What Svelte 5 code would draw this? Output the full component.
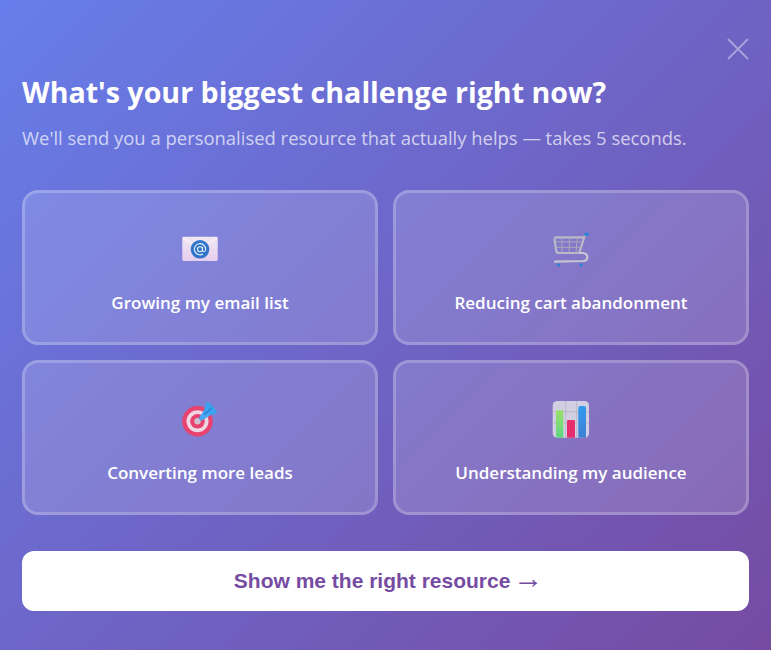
<script>
  const options = [
    { label: 'Growing my email list', icon: 'mail' },
    { label: 'Reducing cart abandonment', icon: 'cart' },
    { label: 'Converting more leads', icon: 'target' },
    { label: 'Understanding my audience', icon: 'chart' }
  ];
</script>

<main class="panel">
  <button class="close" aria-label="Close">
    <svg width="22" height="22" viewBox="0 0 22 22"><path d="M1 1 L21 21 M21 1 L1 21" /></svg>
  </button>
  <h1>What's your biggest challenge right now?</h1>
  <p>We'll send you a personalised resource that actually helps — takes 5 seconds.</p>
  <div class="grid">
    {#each options as o}
      <button class="card">
        <span class="icon">
          {#if o.icon === 'mail'}
            <svg width="40" height="40" viewBox="0 0 40 40">
              <defs>
                <linearGradient id="env" x1="0" y1="0" x2="0" y2="1"><stop offset="0" stop-color="#f0e8f4"/><stop offset="1" stop-color="#e6cdee"/></linearGradient>
              </defs>
              <rect x="2.3" y="6.700" width="35.400" height="24.400" rx="1.500" fill="url(#env)"/>
              <path d="M3 7.500 L20 20 L37 7.500" fill="none" stroke="#fff" stroke-width="1" opacity=".7"/>
              <circle cx="20" cy="19.300" r="9.300" fill="#2f75c9"/>
              <circle cx="20" cy="19.300" r="2.500" fill="none" stroke="#e8f0fb" stroke-width="1.100"/>
              <path d="M22.500 16.800 V20 Q22.500 21.800 24 21.800 Q25.600 21.600 25.600 19.300 A5.600 5.600 0 1 0 23 24" fill="none" stroke="#e8f0fb" stroke-width="1.100"/>
            </svg>
          {:else if o.icon === 'cart'}
            <svg width="40" height="40" viewBox="0 0 40 40">
              <path d="M5.500 7.300 H33.200 L28.900 21 Q28.300 23 26 23 H8 Q5.500 23 5.200 20.500 L3.600 10 Q3.300 7.300 5.500 7.300 Z" fill="none" stroke="#bab9c8" stroke-width="2.200"/>
              <path d="M4 11.900 H31.800 M4.800 17.300 H30 M10.700 7.300 L11.300 23 M18.300 7.300 V23 M26.300 7.300 L25 23" fill="none" stroke="#aaa8ba" stroke-width="1"/>
              <path d="M28.700 23 H32 Q36.300 23.500 36.300 27 Q36.300 30.700 32.300 31 L4 31.700" fill="none" stroke="#c6c5d2" stroke-width="2.200" stroke-linecap="round"/>
              <path d="M33.200 7.300 L34.500 4" fill="none" stroke="#aaa8ba" stroke-width="2"/>
              <rect x="33.300" y="2.700" width="4.700" height="3" rx="1" fill="#2b86d9"/>
              <rect x="6" y="33.500" width="3" height="3" rx="1.200" fill="#2b7ed0"/>
              <rect x="28.600" y="33.500" width="3" height="3" rx="1.200" fill="#2b7ed0"/>
            </svg>
          {:else if o.icon === 'target'}
            <svg width="40" height="40" viewBox="0 0 40 40">
              <circle cx="17.500" cy="21.300" r="15.300" fill="#e8426e"/>
              <circle cx="17.500" cy="21.300" r="11" fill="#eed6e3"/>
              <circle cx="17.500" cy="21.300" r="7.300" fill="#e8426e"/>
              <circle cx="17.500" cy="21.300" r="3.200" fill="#cfc0cf"/>
              <path d="M18.500 18.500 L25 9 L31 15 L21 21 Z" fill="#4aa8f0"/>
              <path d="M22.700 14 L26.700 1.700 L30 3.300 L37.300 11.700 L33.300 15 Z" fill="#3ba3ee"/>
              <path d="M24 15 L32 7.500" stroke="#2a80d8" stroke-width="1.200"/>
            </svg>
          {:else}
            <svg width="40" height="40" viewBox="0 0 40 40">
              <rect x="1.700" y="1" width="36.300" height="36.700" rx="4.500" fill="#d3cfe2"/>
              <path d="M1.700 11.700 H38 M1.700 23 H38 M14.700 1 V37.700 M25.700 1 V37.700" stroke="#bbb8c8" stroke-width="1" fill="none"/>
              <defs>
                <linearGradient id="g1" x1="0" y1="0" x2="0" y2="1"><stop offset="0" stop-color="#9be06a"/><stop offset="1" stop-color="#5fd683"/></linearGradient>
                <linearGradient id="g3" x1="0" y1="0" x2="0" y2="1"><stop offset="0" stop-color="#2f9bf0"/><stop offset="1" stop-color="#3f80d4"/></linearGradient>
              </defs>
              <path d="M5 37.700 V12 Q5 10 7 10 H10.300 Q12.300 10 12.300 12 V37.700 Z" fill="url(#g1)"/>
              <path d="M16 37.700 V21 Q16 20 17 20 H23 Q24 20 24 21 V37.700 Z" fill="#e62e6f"/>
              <path d="M27.300 37.700 V8 Q27.300 6 29.300 6 H33 Q35 6 35 8 V37.700 Z" fill="url(#g3)"/>
            </svg>
          {/if}
        </span>
        <span class="label">{o.label}</span>
      </button>
    {/each}
  </div>
  <button class="cta">Show me the right resource <span class="arrow">→</span></button>
</main>

<style>
  :global(body) { margin: 0; }
  .panel {
    position: relative;
    box-sizing: border-box;
    width: 771px;
    height: 650px;
    padding: 72px 22px 0;
    background: linear-gradient(135deg, #667eea 0%, #764ba2 100%);
    font-family: "Open Sans", "Noto Sans", sans-serif;
    overflow: hidden;
  }
  .close {
    position: absolute;
    top: 38px;
    right: 22px;
    width: 22px;
    height: 22px;
    padding: 0;
    border: 0;
    background: none;
    display: block;
  }
  .close svg { display: block; }
  .close path { stroke: rgba(255,255,255,.4); stroke-width: 2; fill: none; }
  h1 {
    margin: 0;
    color: #fff;
    font-size: 28.6px;
    line-height: 40px;
    font-weight: 700;
  }
  p {
    margin: 8px 0 0;
    color: rgba(255,255,255,.7);
    font-size: 18.45px;
    line-height: 36px;
  }
  .grid {
    margin-top: 34px;
    display: grid;
    grid-template-columns: 1fr 1fr;
    gap: 15px;
  }
  .card {
    box-sizing: border-box;
    height: 155px;
    border: 3px solid rgba(255,255,255,.22);
    border-radius: 16px;
    background: rgba(255,255,255,.15);
    display: flex;
    flex-direction: column;
    align-items: center;
    padding: 37px 0 0;
    font-family: inherit;
  }
  .icon { display: block; width: 40px; height: 40px; }
  .icon svg { display: block; }
  .label {
    margin-top: 21px;
    color: #fff;
    font-size: 17px;
    line-height: 24px;
    font-weight: 600;
  }
  .cta {
    display: block;
    box-sizing: border-box;
    width: 100%;
    height: 60px;
    margin-top: 36px;
    padding: 0 0 6px 6px;
    border: 0;
    border-radius: 12px;
    background: #fff;
    color: #764ba2;
    font-family: "Liberation Sans", Arial, sans-serif;
    font-size: 21px;
    font-weight: 700;
  }
  .arrow {
    margin-left: -3px;
    font-size: 30px;
    font-weight: 400;
    line-height: 1;
  }
</style>
